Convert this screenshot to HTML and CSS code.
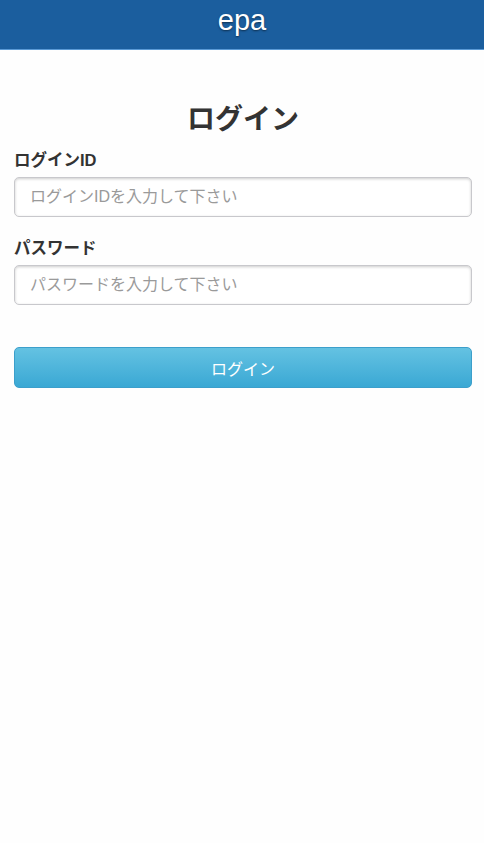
FILE: index.html
```html
<!DOCTYPE html>
<html lang="ja">
<head>
    <meta charset="UTF-8">
    <meta name="viewport" content="width=device-width, initial-scale=1.0">
    <title>epa</title>
    <link rel="stylesheet" href="styles.css">
</head>
<body>
    <header class="app-header">
        <h1 class="app-title">epa</h1>
    </header>

    <main class="login">
        <h2 class="login-title">ログイン</h2>
        <form class="login-form">
            <label class="field-label" for="loginId">ログインID</label>
            <input class="field-input" type="text" id="loginId" placeholder="ログインIDを入力して下さい">

            <label class="field-label" for="password">パスワード</label>
            <input class="field-input" type="password" id="password" placeholder="パスワードを入力して下さい">

            <button type="submit" class="login-button">ログイン</button>
        </form>
    </main>
</body>
</html>
```

FILE: styles.css
```css
/* Reset */
* {
    margin: 0;
    padding: 0;
    box-sizing: border-box;
    font-family: "Liberation Sans", "Noto Sans CJK JP", sans-serif;
}

body {
    background-color: #fefefe;
    color: #333;
    font-size: 16px;
}

/* Header bar */
.app-header {
    height: 50px;
    background-color: #1b5e9e;
    border-bottom: 1px solid #5a9ad6;
    display: flex;
    justify-content: center;
    align-items: center;
}

.app-title {
    color: #fff;
    font-size: 29px;
    font-weight: normal;
    line-height: 1;
    margin-top: -8px;
    text-shadow: 0 1px 2px rgba(0, 0, 0, 0.5);
}

/* Login form */
.login {
    padding: 0 12px 0 14px;
}

.login-title {
    text-align: center;
    font-size: 28px;
    line-height: 34px;
    font-weight: bold;
    color: #333;
    margin-top: 53px;
}

.login-form {
    display: flex;
    flex-direction: column;
}

.field-label {
    font-size: 16.5px;
    line-height: 20px;
    font-weight: bold;
    margin-top: 13px;
    margin-bottom: 7px;
}

.field-label + .field-input + .field-label {
    margin-top: 21px;
}

.field-input {
    height: 40px;
    width: 100%;
    padding: 0 15px;
    font-size: 16px;
    color: #333;
    border: 1px solid #c8c8cc;
    border-radius: 5px;
    background: #fff;
    box-shadow: inset 0 1px 3px rgba(0, 0, 0, 0.2);
}

.field-input::placeholder {
    color: #9a9a9a;
}

.login-button {
    margin-top: 42px;
    height: 41px;
    width: 100%;
    font-size: 16px;
    color: #fff;
    border: 1px solid #3c9fcb;
    border-radius: 5px;
    background: linear-gradient(#64c2e2, #3aa8d4);
    cursor: pointer;
}
```
